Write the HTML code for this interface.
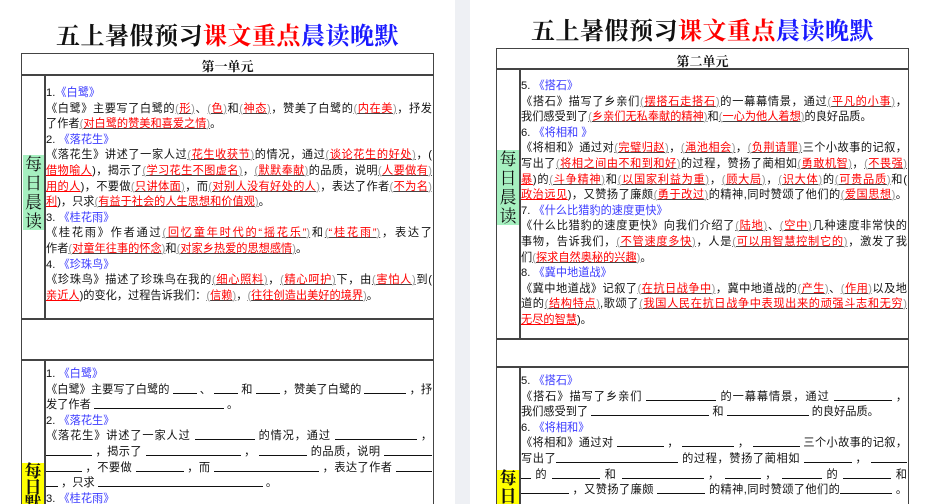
<!DOCTYPE html>
<html><head><meta charset="utf-8">
<style>
*{margin:0;padding:0;box-sizing:border-box}
html,body{width:926px;height:504px;overflow:hidden}
body{background:#fff;position:relative;font-family:"Liberation Sans","Noto Sans CJK SC",sans-serif;font-size:11.2px;color:#111}
.gap{position:absolute;left:455px;top:0;width:15px;height:504px;background:#eef0f4}
.title{position:absolute;font-family:"Liberation Serif","Noto Serif CJK SC",serif;font-weight:bold;font-size:24px;white-space:nowrap;letter-spacing:0.5px}
.r{color:#f00}.bl{color:#1a1aff}
.box{position:absolute;border:1.5px solid #444}
.hl{position:absolute;height:1.5px;background:#444}
.vl{position:absolute;width:1.5px;background:#444}
.hdr{position:absolute;font-weight:bold;font-size:13px;font-family:"Liberation Serif","Noto Serif CJK SC",serif;text-align:center}
.lab{position:absolute;font-size:18px;line-height:24px;text-align:center;font-family:"Liberation Serif","Noto Serif CJK SC",serif}
.txt{position:absolute;line-height:15.6px;white-space:nowrap}
.txt div{height:15.6px;overflow:hidden}
.j{text-align:justify;text-align-last:justify}
.t{color:#3b3bff}
i{font-style:normal;color:#f00;text-decoration:underline;text-decoration-color:#444}
i::before{content:"(";color:#999}
i::after{content:")";color:#999}
u{display:inline-block;border-bottom:1px solid #111;height:11px;vertical-align:-1px;text-decoration:none}
</style></head><body>
<div class="gap"></div>

<!-- LEFT PAGE -->
<div class="title" style="left:56px;top:16px">五上暑假预习<span class="r">课文重点</span><span class="bl">晨读晚默</span></div>
<div class="box" style="left:21px;top:53px;width:413px;height:460px"></div>
<div class="hl" style="left:21px;top:74px;width:413px"></div>
<div class="hl" style="left:21px;top:318px;width:413px"></div>
<div class="hl" style="left:21px;top:359px;width:413px"></div>
<div class="vl" style="left:44px;top:74px;height:245px"></div>
<div class="vl" style="left:44px;top:359px;height:150px"></div>
<div class="hdr" style="left:21px;top:56px;width:413px">第一单元</div>
<div class="lab" style="left:23px;top:155px;width:21px;height:75px;background:#a6f0c0;font-size:17px;line-height:19px">每<br>日<br>晨<br>读</div>
<div class="lab" style="left:22px;top:463px;width:22px;height:45px;background:#ffff00;font-weight:bold;font-size:17px;line-height:16px;padding-top:1px">每<br>日<br>默</div>

<div class="txt" style="left:46px;top:86px;width:386px">
<div>1.<span class="t">《白鹭》</span></div>
<div class="j">《白鹭》主要写了白鹭的<i>形</i>、<i>色</i>和<i>神态</i>，赞美了白鹭的<i>内在美</i>，抒发</div>
<div>了作者<i>对白鹭的赞美和喜爱之情</i>。</div>
<div>2. <span class="t">《落花生》</span></div>
<div class="j">《落花生》讲述了一家人过<i>花生收获节</i>的情况，通过<i>谈论花生的好处</i>，(</div>
<div class="j"><span class="r" style="text-decoration:underline">借物喻人</span>)，揭示了<i>学习花生不图虚名</i>，<i>默默奉献</i>的品质，说明<i>人要做有</i></div>
<div class="j"><span class="r" style="text-decoration:underline">用的人</span>)，不要做<i>只讲体面</i>，而<i>对别人没有好处的人</i>，表达了作者<i>不为名</i></div>
<div><span class="r" style="text-decoration:underline">利</span>)，只求<i>有益于社会的人生思想和价值观</i>。</div>
<div>3. <span class="t">《桂花雨》</span></div>
<div class="j">《桂花雨》作者通过<i>回忆童年时代的“摇花乐”</i>和<i>“桂花雨”</i>，表达了</div>
<div>作者<i>对童年往事的怀念</i>和<i>对家乡热爱的思想感情</i>。</div>
<div>4. <span class="t">《珍珠鸟》</span></div>
<div class="j">《珍珠鸟》描述了珍珠鸟在我的<i>细心照料</i>，<i>精心呵护</i>下，由<i>害怕人</i>到(</div>
<div><span class="r" style="text-decoration:underline">亲近人</span>)的变化，过程告诉我们：<i>信赖</i>，<i>往往创造出美好的境界</i>。</div>
</div>

<div class="txt" style="left:46px;top:367px;width:386px">
<div>1. <span class="t">《白鹭》</span></div>
<div class="j">《白鹭》主要写了白鹭的 <u style="width:24px"></u> 、 <u style="width:24px"></u> 和 <u style="width:24px"></u> ，赞美了白鹭的 <u style="width:42px"></u> ，抒</div>
<div>发了作者 <u style="width:130px"></u> 。</div>
<div>2. <span class="t">《落花生》</span></div>
<div class="j">《落花生》讲述了一家人过 <u style="width:60px"></u> 的情况，通过 <u style="width:82px"></u> ，</div>
<div class="j"><u style="width:46px"></u> ，揭示了 <u style="width:95px"></u> ， <u style="width:48px"></u> 的品质，说明 <u style="width:48px"></u></div>
<div class="j"><u style="width:36px"></u> ，不要做 <u style="width:48px"></u> ，而 <u style="width:105px"></u> ，表达了作者 <u style="width:36px"></u></div>
<div><u style="width:12px"></u> ，只求 <u style="width:165px"></u> 。</div>
<div>3. <span class="t">《桂花雨》</span></div>
</div>

<!-- RIGHT PAGE -->
<div class="title" style="left:531px;top:11px">五上暑假预习<span class="r">课文重点</span><span class="bl">晨读晚默</span></div>
<div class="box" style="left:496px;top:48px;width:413px;height:470px"></div>
<div class="hl" style="left:496px;top:68px;width:413px"></div>
<div class="hl" style="left:496px;top:338px;width:413px"></div>
<div class="hl" style="left:496px;top:366px;width:413px"></div>
<div class="vl" style="left:519px;top:68px;height:271px"></div>
<div class="vl" style="left:519px;top:366px;height:150px"></div>
<div class="hdr" style="left:496px;top:51px;width:413px">第二单元</div>
<div class="lab" style="left:497px;top:150px;width:22px;height:75px;background:#a6f0c0;font-size:17px;line-height:19px">每<br>日<br>晨<br>读</div>
<div class="lab" style="left:497px;top:470px;width:22px;height:40px;background:#ffff00;font-weight:bold;font-size:17px;line-height:18px">每<br>日</div>

<div class="txt" style="left:521px;top:79px;width:386px">
<div>5. <span class="t">《搭石》</span></div>
<div class="j">《搭石》描写了乡亲们<i>摆搭石走搭石</i>的一幕幕情景，通过<i>平凡的小事</i>，</div>
<div>我们感受到了<i>乡亲们无私奉献的精神</i>和<i>一心为他人着想</i>的良好品质。</div>
<div>6. <span class="t">《将相和 》</span></div>
<div class="j">《将相和》通过对<i>完璧归赵</i>，<i>渑池相会</i>，<i>负荆请罪</i>三个小故事的记叙，</div>
<div class="j">写出了<i>将相之间由不和到和好</i>的过程，赞扬了蔺相如<i>勇敢机智</i>，<i>不畏强</i></div>
<div class="j"><span class="r" style="text-decoration:underline">暴</span>)的<i>斗争精神</i>和<i>以国家利益为重</i>，<i>顾大局</i>，<i>识大体</i>的<i>可贵品质</i>和(</div>
<div class="j"><span class="r" style="text-decoration:underline">政治远见</span>)，又赞扬了廉颇<i>勇于改过</i>的精神,同时赞颂了他们的<i>爱国思想</i>。</div>
<div>7. <span class="t">《什么比猎豹的速度更快》</span></div>
<div class="j">《什么比猎豹的速度更快》向我们介绍了<i>陆地</i>、<i>空中</i>几种速度非常快的</div>
<div class="j">事物，告诉我们，<i>不管速度多快</i>，人是<i>可以用智慧控制它的</i>，激发了我</div>
<div>们<i>探求自然奥秘的兴趣</i>。</div>
<div>8. <span class="t">《冀中地道战》</span></div>
<div class="j">《冀中地道战》记叙了<i>在抗日战争中</i>，冀中地道战的<i>产生</i>、<i>作用</i>以及地</div>
<div class="j">道的<i>结构特点</i>,歌颂了<i>我国人民在抗日战争中表现出来的顽强斗志和无穷</i></div>
<div><span class="r" style="text-decoration:underline">无尽的智慧</span>)。</div>
</div>

<div class="txt" style="left:521px;top:374px;width:386px">
<div>5. <span class="t">《搭石》</span></div>
<div class="j">《搭石》描写了乡亲们 <u style="width:70px"></u> 的一幕幕情景，通过 <u style="width:58px"></u> ，</div>
<div>我们感受到了 <u style="width:118px"></u> 和 <u style="width:82px"></u> 的良好品质。</div>
<div>6. <span class="t">《将相和》</span></div>
<div class="j">《将相和》通过对 <u style="width:47px"></u> ， <u style="width:52px"></u> ， <u style="width:47px"></u> 三个小故事的记叙，</div>
<div class="j">写出了<u style="width:122px"></u> 的过程，赞扬了蔺相如 <u style="width:48px"></u> ， <u style="width:36px"></u></div>
<div class="j"><u style="width:10px"></u> 的 <u style="width:48px"></u> 和 <u style="width:82px"></u> ， <u style="width:36px"></u> ， <u style="width:40px"></u> 的 <u style="width:48px"></u> 和</div>
<div class="j"><u style="width:48px"></u> ，又赞扬了廉颇 <u style="width:48px"></u> 的精神,同时赞颂了他们的<u style="width:52px"></u> 。</div>
</div>
</body></html>
